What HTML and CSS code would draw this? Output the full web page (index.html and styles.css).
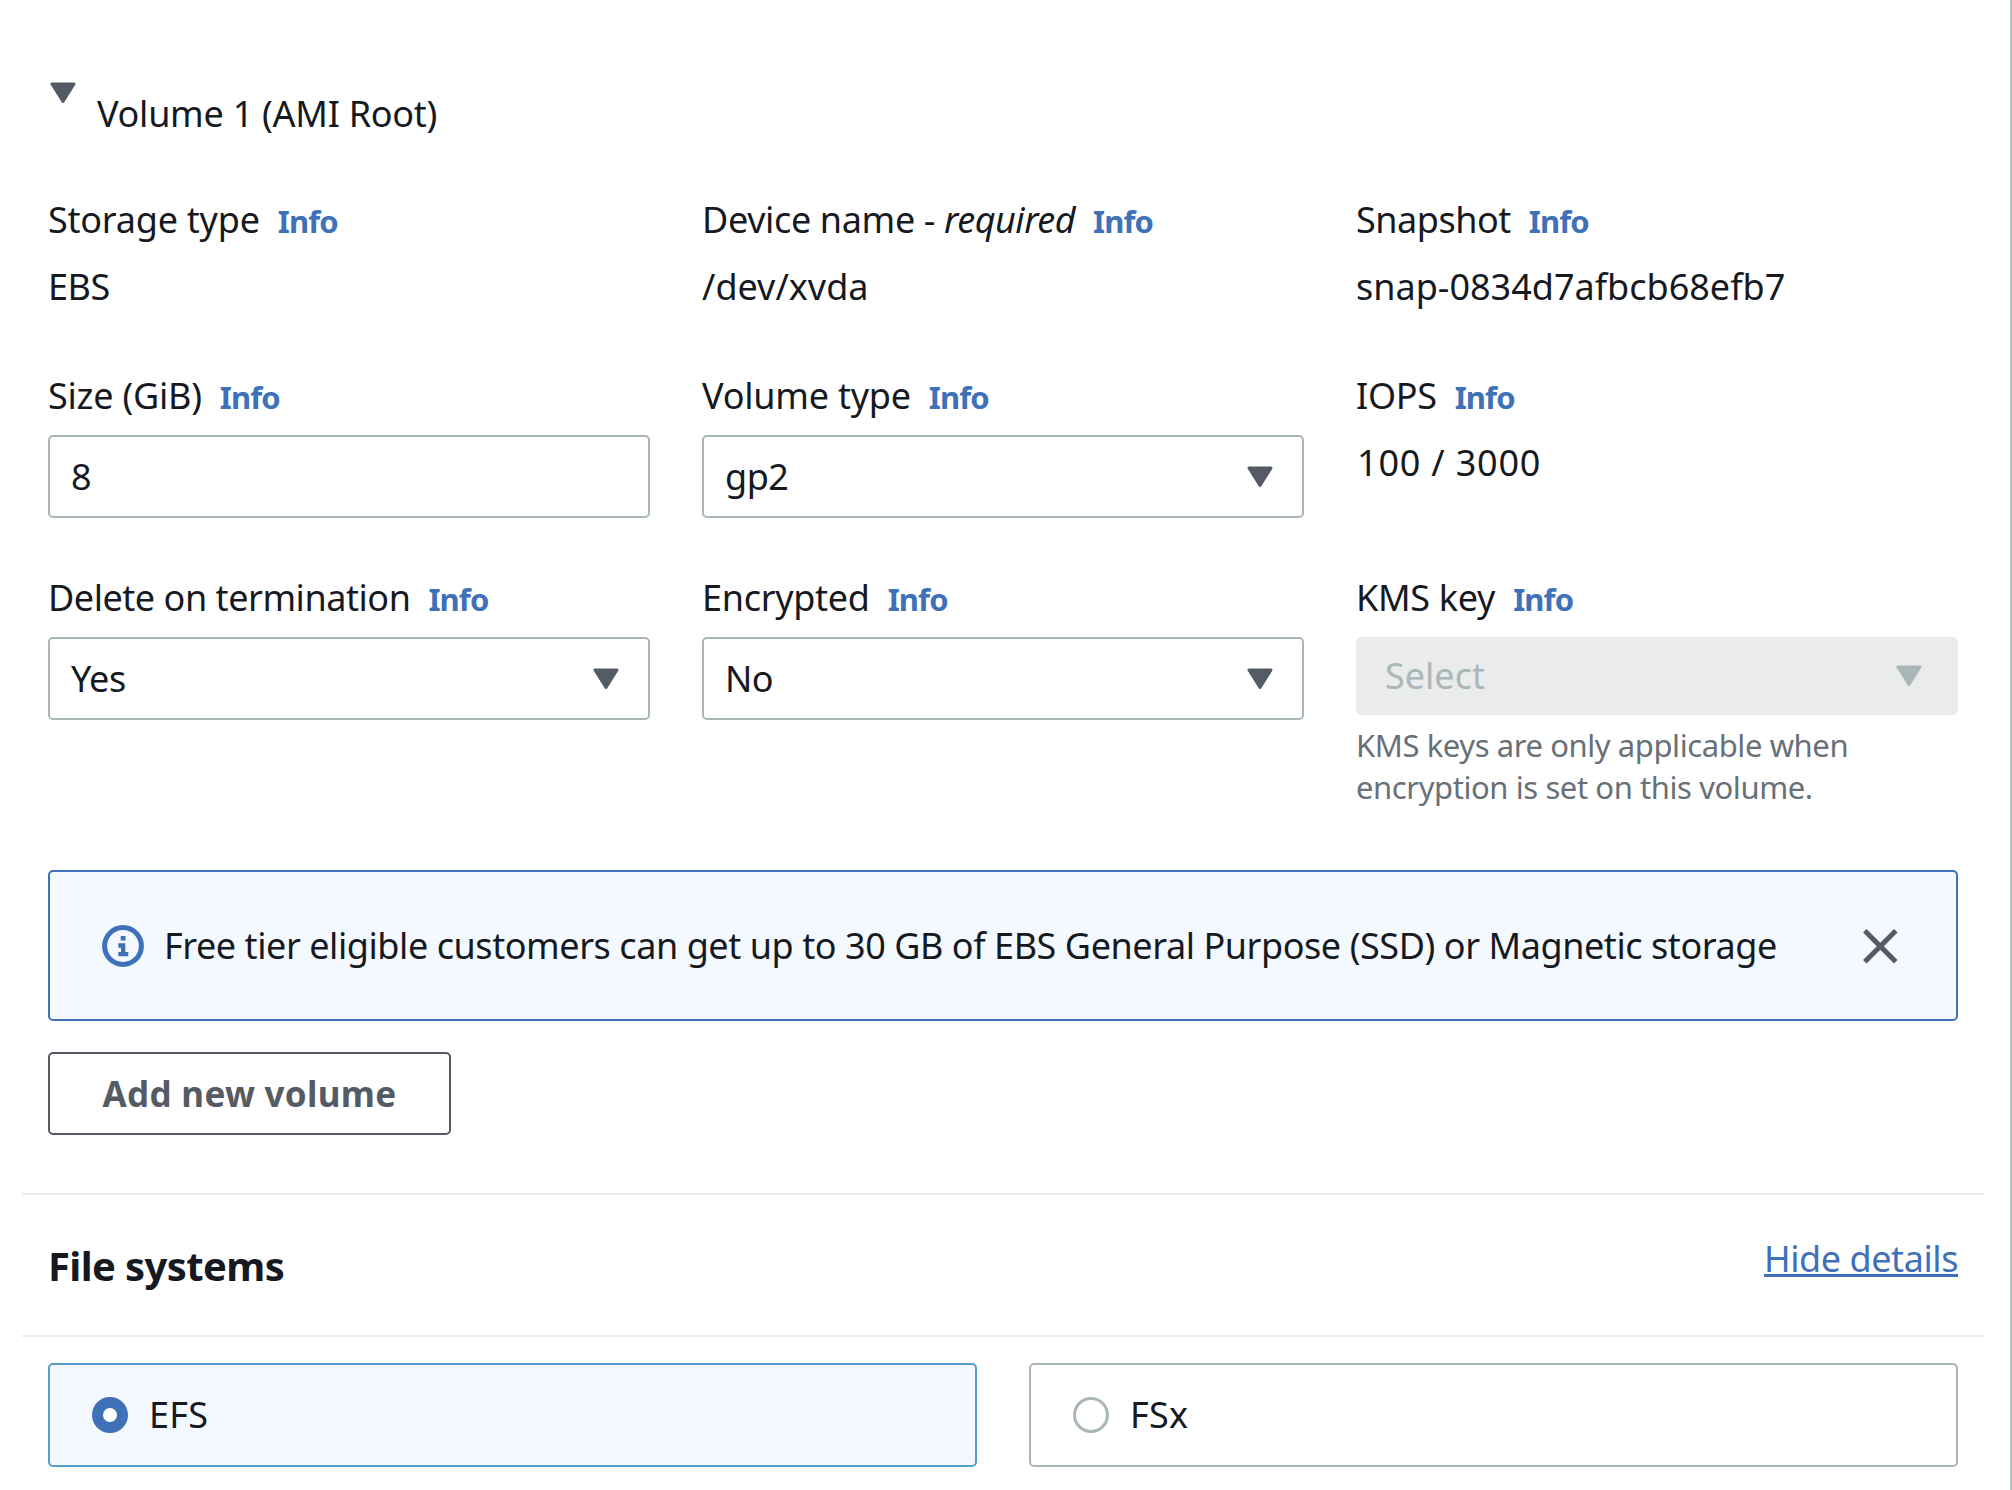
FILE: index.html
```html
<!DOCTYPE html>
<html lang="en">
<head>
<meta charset="utf-8">
<title>Configure storage</title>
<link rel="stylesheet" href="styles.css">
</head>
<body>
<main class="panel">
  <section class="volume">
    <header class="volume-head">
      <svg class="caret" viewBox="0 0 26 22"><path d="M2 2h22L13 19.500z"/></svg>
      <h3 class="volume-title"><span class="t-title">Volume 1 (AMI Root)</span></h3>
    </header>

    <div class="grid">
      <div class="field">
        <div class="label"><span class="t-storage">Storage type</span><a class="info">Info</a></div>
        <div class="value"><span class="t-ebs">EBS</span></div>
      </div>
      <div class="field">
        <div class="label"><span class="t-device">Device name - <em class="t-required">required</em></span><a class="info">Info</a></div>
        <div class="value"><span class="t-path">/dev/xvda</span></div>
      </div>
      <div class="field">
        <div class="label"><span class="t-snapshot">Snapshot</span><a class="info">Info</a></div>
        <div class="value"><span class="t-snapid">snap-0834d7afbcb68efb7</span></div>
      </div>

      <div class="field">
        <div class="label"><span class="t-size">Size (GiB)</span><a class="info">Info</a></div>
        <div class="control"><span>8</span></div>
      </div>
      <div class="field">
        <div class="label"><span class="t-voltype">Volume type</span><a class="info">Info</a></div>
        <div class="control"><span class="t-gp2">gp2</span><svg class="caret" viewBox="0 0 26 22"><path d="M2 2h22L13 19.500z"/></svg></div>
      </div>
      <div class="field">
        <div class="label"><span class="t-iops">IOPS</span><a class="info">Info</a></div>
        <div class="value"><span class="t-iopsval">100 / 3000</span></div>
      </div>

      <div class="field">
        <div class="label"><span class="t-delete">Delete on termination</span><a class="info">Info</a></div>
        <div class="control"><span class="t-yes">Yes</span><svg class="caret" viewBox="0 0 26 22"><path d="M2 2h22L13 19.500z"/></svg></div>
      </div>
      <div class="field">
        <div class="label"><span class="t-encrypted">Encrypted</span><a class="info">Info</a></div>
        <div class="control"><span class="t-no">No</span><svg class="caret" viewBox="0 0 26 22"><path d="M2 2h22L13 19.500z"/></svg></div>
      </div>
      <div class="field">
        <div class="label"><span class="t-kms">KMS key</span><a class="info">Info</a></div>
        <div class="control control-disabled"><span class="t-select">Select</span><svg class="caret" viewBox="0 0 26 22"><path d="M2 2h22L13 19.500z"/></svg></div>
        <p class="help">KMS keys are only applicable when<br>encryption is set on this volume.</p>
      </div>
    </div>

    <div class="alert">
      <svg class="alert-icon" viewBox="0 0 42 42"><circle cx="21" cy="21" r="18.400"/><path d="M18.700 11h4.800v4.600h-4.800zM16.300 18.300h7v8.700h3v4.300h-10V27H19v-4.200h-2.700z"/></svg>
      <p class="alert-text"><span class="t-alert">Free tier eligible customers can get up to 30 GB of EBS General Purpose (SSD) or Magnetic storage</span></p>
      <svg class="alert-close" viewBox="0 0 36 36"><path d="M2.800 2.800l31 31M33.800 2.800l-31 31"/></svg>
    </div>

    <button class="add" type="button">Add new volume</button>
  </section>

  <section class="filesystems">
    <header class="fs-head">
      <h2 class="fs-title">File systems</h2>
      <a class="fs-link">Hide details</a>
    </header>
    <div class="tiles">
      <div class="tile tile-on"><span class="radio radio-on"></span><span class="t-tile">EFS</span></div>
      <div class="tile"><span class="radio"></span><span class="t-tile">FSx</span></div>
    </div>
  </section>
</main>
</body>
</html>
```

FILE: styles.css
```css
* { box-sizing: border-box; }
body { margin: 0; background: #fff; }
h2, h3, p { margin: 0; font-weight: 400; }

.panel {
  width: 2012px;
  height: 1490px;
  padding: 82px 26px 0 22px;
  border-right: 2px solid #b9c1c1;
  font-family: "Noto Sans", "Open Sans", sans-serif;
  font-size: 36px;
  line-height: 56px;
  color: #16191f;
  white-space: nowrap;
  overflow: hidden;
}

.volume { padding: 0 26px 58px; border-bottom: 2px solid #eaeded; }
.volume-head { display: flex; gap: 21px; height: 110px; padding-left: 2px; }
.volume-title { font-size: 36px; padding-top: 4px; }
.caret { display: block; flex: none; width: 26px; height: 22px; fill: #545b64; stroke: #545b64; stroke-width: 3; stroke-linejoin: round; }

.grid { display: grid; grid-template-columns: repeat(3, 602px); grid-template-rows: 176px 202px 300px; column-gap: 52px; }
.label { display: flex; align-items: baseline; gap: 18px; height: 67px; }
.info { font-size: 31px; font-weight: 700; line-height: 42px; letter-spacing: -0.9px; color: #3f71b9; }
.control { display: flex; align-items: center; justify-content: space-between; height: 83px; padding: 0 29px 0 21px; border: 2px solid #aab7b8; border-radius: 5px; }
.control-disabled { height: 78px; padding: 0 36px 0 29px; border: 0; background: #eaeceb; color: #aab7b8; }
.control-disabled .caret { fill: #aab7b8; stroke: #aab7b8; }
.help { padding-top: 9px; font-size: 31px; line-height: 42px; letter-spacing: -0.42px; color: #687078; }

.alert { display: flex; align-items: center; height: 151px; padding: 0 58px 0 52px; border: 2px solid #3f71b9; border-radius: 5px; background: #f4f9ff; }
.alert-icon { width: 42px; height: 42px; fill: #3f71b9; }
.alert-icon circle { fill: none; stroke: #3f71b9; stroke-width: 5; }
.alert-text { flex: 1; padding-left: 20px; }
.alert-close { width: 36px; height: 36px; stroke: #545b64; stroke-width: 5; }

.add { display: flex; align-items: center; justify-content: center; width: 403px; height: 83px; margin-top: 31px; padding: 0; border: 2px solid #545b64; border-radius: 5px; background: #fff; color: #545b64; font: 700 35px/56px "Noto Sans", "Open Sans", sans-serif; letter-spacing: 0.3px; }

.fs-head { display: flex; justify-content: space-between; height: 142px; padding: 0 26px; border-bottom: 2px solid #eaeded; }
.fs-title { padding-top: 43px; font-size: 40px; font-weight: 700; letter-spacing: -0.6px; }
.fs-link { padding-top: 36px; color: #3f71b9; letter-spacing: -0.43px; text-decoration: underline; text-decoration-thickness: 3px; text-underline-offset: 2px; text-decoration-skip-ink: none; }
.tiles { display: grid; grid-template-columns: 1fr 1fr; gap: 52px; padding: 26px 26px 0; }
.tile { display: flex; align-items: center; gap: 21px; height: 104px; padding: 0 42px; border: 2px solid #aab7b8; border-radius: 5px; }
.tile-on { border-color: #569fc9; background: #f4f9ff; }
.radio { width: 36px; height: 36px; border: 3px solid #aab7b8; border-radius: 50%; background: #fff; }
.radio-on { border: 11px solid #3f71b9; }

/* Tracking for individual strings */
.t-title { letter-spacing: -0.27px; }
.t-storage, .t-size, .t-voltype { letter-spacing: -0.23px; }
.t-ebs { letter-spacing: -0.4px; }
.t-device { letter-spacing: -0.36px; }
.t-required { letter-spacing: -0.5px; }
.t-snapshot { letter-spacing: -0.48px; }
.t-iops, .t-encrypted, .t-kms { letter-spacing: -0.3px; }
.t-iopsval { padding-left: 1px; letter-spacing: 0.8px; }
.t-delete { letter-spacing: -0.46px; }
.t-gp2, .t-yes, .t-no { letter-spacing: -0.5px; }
.t-alert { letter-spacing: -0.437px; }
.t-tile { letter-spacing: 0.3px; }
```
